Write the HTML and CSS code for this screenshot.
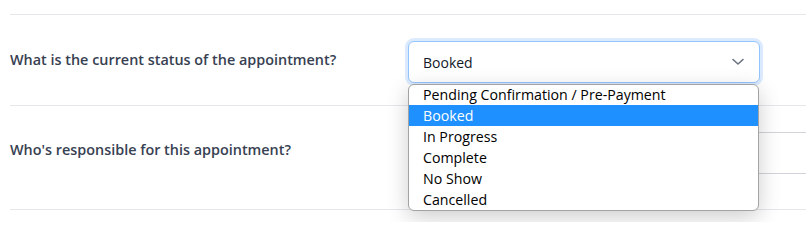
FILE: index.html
```html
<!DOCTYPE html>
<html>
<head>
<meta charset="utf-8">
<link rel="stylesheet" href="styles.css">
</head>
<body>
<div class="form">
  <div class="row row-status">
    <label class="label">What is the current status of the appointment?</label>
    <div class="field">
      <div class="select">
        <span class="select-value">Booked</span>
        <svg class="chevron" width="12" height="8" viewBox="0 0 12 8"><path d="M1 1.5 L6 6 L11 1.5" fill="none" stroke="#6b7280" stroke-width="1.6" stroke-linecap="round" stroke-linejoin="round"/></svg>
      </div>
      <ul class="dropdown">
        <li class="option">Pending Confirmation / Pre-Payment</li>
        <li class="option selected">Booked</li>
        <li class="option">In Progress</li>
        <li class="option">Complete</li>
        <li class="option">No Show</li>
        <li class="option">Cancelled</li>
      </ul>
    </div>
  </div>
  <div class="row row-owner">
    <label class="label">Who's responsible for this appointment?</label>
    <div class="field">
      <div class="select wide"></div>
    </div>
  </div>
</div>
</body>
</html>
```
FILE: styles.css
```css
html, body {
  margin: 0;
  padding: 0;
  background: #ffffff;
  overflow: hidden;
}
body {
  font-family: "Open Sans", "Noto Sans", sans-serif;
  width: 806px;
  height: 222px;
}
.form {
  padding-top: 14px;
  padding-left: 10px;
}
.row {
  display: grid;
  grid-template-columns: 398px 1fr;
  align-items: start;
  border-top: 1px solid #e5e7eb;
}
.row-status {
  padding: 26px 0 22px;
}
.row-owner {
  padding: 26px 0 35px;
  border-bottom: 1px solid #e5e7eb;
}
.label {
  font-size: 14.4px;
  font-weight: 600;
  color: #374151;
  line-height: 18px;
  padding-top: 10px;
}
.row-owner .label {
  padding-top: 9px;
}
.field {
  position: relative;
}
.select {
  box-sizing: border-box;
  width: 352px;
  height: 42px;
  border: 1px solid #93c5fd;
  border-radius: 6px;
  box-shadow: 0 0 0 3px #dbeafe;
  display: flex;
  align-items: center;
  justify-content: space-between;
  padding: 0 15px 0 14px;
  background: #fff;
}
.select.wide {
  width: 100%;
  border-color: #d1d5db;
  border-right: none;
  border-radius: 6px 0 0 6px;
  box-shadow: none;
}
.select-value {
  font-size: 14px;
  color: #111827;
}
.chevron {
  display: block;
}
.dropdown {
  position: absolute;
  top: 43px;
  left: 0;
  width: 351px;
  box-sizing: border-box;
  margin: 0;
  padding: 0;
  list-style: none;
  background: #fff;
  border: 1px solid #a3a3a3;
  border-radius: 6px;
  box-shadow: 0 6px 22px rgba(0, 0, 0, 0.2);
  overflow: hidden;
  z-index: 10;
}
.option {
  height: 21px;
  line-height: 21px;
  padding-left: 14px;
  font-size: 14.2px;
  color: #000;
}
.option:first-child {
  height: 20px;
  line-height: 20px;
}
.option.selected {
  background: #1e90ff;
  color: #fff;
}
```
